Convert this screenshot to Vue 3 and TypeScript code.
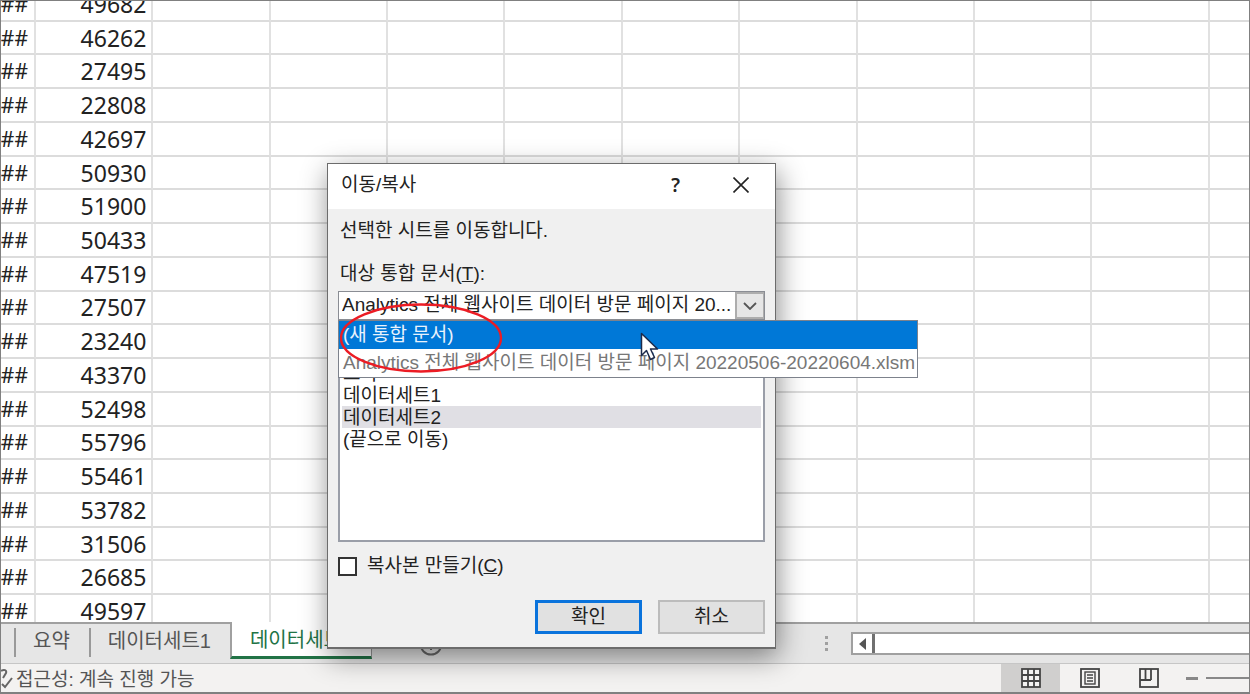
<script setup lang="ts">
import { ref } from 'vue'

const values: number[] = [
  49682, 46262, 27495, 22808, 42697, 50930, 51900, 50433, 47519, 27507,
  23240, 43370, 52498, 55796, 55461, 53782, 31506, 26685, 49597,
]
const emptyColumns = 10

const tabs = ['요약', '데이터세트1', '데이터세트2']
const activeTab = ref('데이터세트2')

const currentBook = 'Analytics 전체 웹사이트 데이터 방문 페이지 20...'
const books = ['(새 통합 문서)', 'Analytics 전체 웹사이트 데이터 방문 페이지 20220506-20220604.xlsm']
const hoveredBook = ref(0)

const sheets = ['요약', '데이터세트1', '데이터세트2', '(끝으로 이동)']
const beforeSheet = ref('데이터세트2')
const makeCopy = ref(false)
</script>

<template>
  <div class="app">
    <main class="sheet">
      <table class="grid">
        <colgroup>
          <col class="narrow" />
          <col v-for="c in emptyColumns + 1" :key="c" />
        </colgroup>
        <tbody>
          <tr v-for="(v, i) in values" :key="i">
            <td class="hash">##</td>
            <td class="num">{{ v }}</td>
            <td v-for="c in emptyColumns" :key="c"></td>
          </tr>
        </tbody>
      </table>
    </main>

    <nav class="tabbar">
      <div class="tabs">
        <button
          v-for="t in tabs"
          :key="t"
          type="button"
          class="tab"
          :class="{ active: t === activeTab }"
          @click="activeTab = t"
        >{{ t }}</button>
      </div>
      <button type="button" class="add" aria-label="새 시트">
        <svg width="24" height="24" viewBox="0 0 24 24" fill="none" stroke="#6a6a6a" stroke-width="2">
          <circle cx="12" cy="12" r="10.5" />
          <path d="M12 6v12M6 12h12" />
        </svg>
      </button>
      <svg class="grip" width="4" height="16" viewBox="0 0 4 16" fill="#a0a0a0">
        <rect width="3" height="3" x="0" y="0" /><rect width="3" height="3" x="0" y="6" /><rect width="3" height="3" x="0" y="12" />
      </svg>
      <div class="scroll">
        <button type="button" class="scroll-left" aria-label="왼쪽으로 스크롤">
          <svg width="8" height="12" viewBox="0 0 8 12" fill="#555"><path d="M7 0v12L0 6z" /></svg>
        </button>
      </div>
    </nav>

    <footer class="status">
      <svg class="acc" width="12" height="22" viewBox="0 0 12 22" fill="none" stroke="#666" stroke-width="2">
        <path d="M0 4c3-2 6-1 5 2l-3 5M1 17l3 3 7-9" />
      </svg>
      <span class="status-text">접근성: 계속 진행 가능</span>
      <button type="button" class="view on" aria-label="기본">
        <svg width="20" height="20" viewBox="0 0 20 20" fill="none" stroke="#444" stroke-width="1.8">
          <rect x="1" y="1" width="18" height="18" fill="#f3f2f1" /><path d="M7 1v18M13 1v18M1 7h18M1 13h18" />
        </svg>
      </button>
      <button type="button" class="view" aria-label="페이지 레이아웃">
        <svg width="20" height="20" viewBox="0 0 20 20" fill="none" stroke="#444" stroke-width="1.8">
          <rect x="1" y="1" width="18" height="18" /><rect x="5" y="4" width="10" height="12" stroke-width="1.4" /><path d="M7 7h6M7 10h6M7 13h6" stroke-width="1.4" />
        </svg>
      </button>
      <button type="button" class="view" aria-label="페이지 나누기 미리 보기">
        <svg width="20" height="20" viewBox="0 0 20 20" fill="none" stroke="#444" stroke-width="1.8">
          <rect x="1" y="1" width="18" height="18" /><path d="M6.500 1v11M12 1v11M1 12h11" />
        </svg>
      </button>
      <button type="button" class="minus" aria-label="축소"></button>
      <span class="zoom-line"></span>
    </footer>

    <section class="dialog" role="dialog" aria-labelledby="dlg-title">
      <header class="title">
        <h1 id="dlg-title">이동/복사</h1>
        <button type="button" class="help" aria-label="도움말">?</button>
        <button type="button" class="close" aria-label="닫기">
          <svg width="16" height="16" viewBox="0 0 16 16" stroke="#222" stroke-width="1.6"><path d="M0.500 0.500l15 15M15.500 0.500l-15 15" /></svg>
        </button>
      </header>
      <div class="body">
        <p class="lead">선택한 시트를 이동합니다.</p>
        <label class="book-label" for="book">대상 통합 문서(<u>T</u>):</label>
        <div class="combo">
          <select id="book"><option>{{ currentBook }}</option></select>
          <span class="chevron">
            <svg width="14" height="8" viewBox="0 0 14 8" fill="none" stroke="#555" stroke-width="1.8"><path d="M1 1l6 6 6-6" /></svg>
          </span>
          <ul class="menu" role="listbox" aria-label="통합 문서 목록">
            <li
              v-for="(b, i) in books"
              :key="b"
              role="option"
              :aria-selected="i === hoveredBook"
              :class="{ hover: i === hoveredBook }"
              @mouseenter="hoveredBook = i"
            >{{ b }}</li>
          </ul>
        </div>
        <select v-model="beforeSheet" class="list" size="6" aria-label="다음 시트의 앞에">
          <option v-for="s in sheets" :key="s" :value="s">{{ s }}</option>
        </select>
        <label class="copy">
          <input v-model="makeCopy" type="checkbox" />
          <span>복사본 만들기(<u>C</u>)</span>
        </label>
        <div class="actions">
          <button type="button" class="btn primary">확인</button>
          <button type="button" class="btn">취소</button>
        </div>
      </div>
      <svg class="ring" width="166" height="72" viewBox="0 0 166 72" fill="none" stroke="#ec1c24" stroke-width="2.4">
        <ellipse cx="83" cy="36" rx="80" ry="33.500" />
      </svg>
      <svg class="cursor" width="20" height="30" viewBox="0 0 20 30" fill="#fff" stroke="#1c2a4a" stroke-width="1.500" stroke-linejoin="round">
        <path d="M1.500 1.500v22l5-5 4 9 4-2-4-8.500h7z" />
      </svg>
    </section>
  </div>
</template>

<style>
html,
body {
  margin: 0;
  overflow: hidden;
}
</style>

<style scoped>
* {
  box-sizing: border-box;
}
.app {
  position: relative;
  display: flex;
  flex-direction: column;
  height: 100vh;
  border: 1px solid #808080;
  border-bottom-width: 2px;
  overflow: hidden;
  background: #fff;
  color: #222;
  font-family: "Liberation Sans", "Noto Sans CJK KR", sans-serif;
  font-size: 19px;
  line-height: 24px;
}
button,
select,
input {
  margin: 0;
  padding: 0;
  font: inherit;
  color: inherit;
  border: 0;
  border-radius: 0;
  background: none;
}
svg {
  display: block;
}

/* worksheet */
.sheet {
  flex: 1;
  min-height: 0;
  overflow: hidden;
}
.grid {
  table-layout: fixed;
  width: calc(100% + 78px);
  height: calc(100% + 20px);
  margin-top: -13px;
  border-collapse: separate;
  border-spacing: 0;
  font-family: "Noto Sans", sans-serif;
  font-size: 23px;
  line-height: 28px;
}
.narrow {
  width: 35px;
}
.grid td {
  padding: 0;
  border-right: 2px solid #e1e1e1;
  border-bottom: 2px solid #dcdcdc;
}
.grid .num {
  padding-right: 5px;
  text-align: right;
}
.grid .hash {
  padding-right: 7px;
  direction: rtl;
  text-align: right;
  overflow: hidden;
  font-size: 21px;
}

/* sheet tabs */
.tabbar {
  display: flex;
  align-items: center;
  height: 41px;
  border-top: 2px solid #a0a0a0;
  background: #e6e6e6;
}
.tabs {
  display: flex;
  align-self: flex-start;
  padding-left: 13px;
}
.tab {
  height: 33px;
  padding: 0 19px;
  color: #555;
  font-size: 20px;
  line-height: 32px;
  background: linear-gradient(#999, #999) 0 4px / 2px 29px no-repeat;
}
.tab.active {
  height: 37px;
  margin-top: -2px;
  padding: 2px 18px 0;
  border-right: 1px solid #999;
  border-left: 2px solid #a0a0a0;
  border-bottom: 3px solid #217346;
  background: #fff;
  color: #217346;
}
.add {
  margin-left: 47px;
}
.grip {
  margin-left: auto;
  margin-right: 22px;
}
.scroll {
  display: flex;
  width: 398px;
  height: 23px;
  border: 2px solid #a0a0a0;
  border-right: 0;
  background: #fff;
}
.scroll-left {
  display: flex;
  align-items: center;
  justify-content: center;
  width: 22px;
  border-right: 3px solid #707070;
}

/* status bar */
.status {
  display: flex;
  align-items: center;
  height: 29px;
  border-top: 1px solid #c6c6c6;
  background: #f3f2f1;
  color: #555;
}
.acc {
  margin-right: 3px;
}
.status-text {
  margin-right: auto;
  padding-top: 3px;
}
.view {
  display: flex;
  align-items: center;
  justify-content: center;
  width: 59px;
  height: 28px;
}
.view.on {
  background: #d0cfce;
}
.minus {
  width: 12px;
  height: 3px;
  margin-left: 8px;
  background: #888;
}
.zoom-line {
  width: 43px;
  height: 2px;
  margin-left: 8px;
  background: #888;
}

/* dialog window */
.dialog {
  position: absolute;
  left: 326px;
  top: 162px;
  width: 449px;
  border: 1px solid #6c6c6c;
  border-bottom-width: 2px;
  background: #f0f0f0;
  box-shadow: 2px 8px 26px rgba(0, 0, 0, 0.45);
}
.title {
  display: flex;
  align-items: center;
  height: 45px;
  padding: 0 26px 3px 13px;
  background: #fff;
}
.title h1 {
  flex: 1;
  margin: 0;
  font-size: 19px;
  font-weight: 400;
}
.help {
  margin-right: 53px;
  font-family: "Noto Sans", sans-serif;
  font-weight: 600;
}
.body {
  padding: 10px 10px 13px;
}
.lead {
  margin: 0 0 19px;
  padding-left: 2px;
}
.book-label {
  display: block;
  padding-left: 2px;
  margin-bottom: 5px;
}
.combo {
  position: relative;
  display: flex;
  height: 29px;
  border: 1px solid #8a8d94;
  background: #fff;
}
.combo select {
  flex: 1;
  min-width: 0;
  padding: 0 0 2px 3px;
  appearance: none;
  outline: 0;
}
.chevron {
  display: flex;
  align-items: center;
  justify-content: center;
  width: 29px;
  border: 2px solid #adadad;
  border-right-width: 1px;
  background: #e6e6e6;
}
.menu {
  position: absolute;
  left: -1px;
  top: 28px;
  margin: 0;
  padding: 0;
  min-width: 580px;
  border: 1px solid #7d828c;
  background: #fff;
  color: #777;
  list-style: none;
  white-space: nowrap;
}
.menu li {
  height: 28px;
  padding-left: 4px;
  line-height: 28px;
}
.menu .hover {
  background: #0078d7;
  color: #e8f2fc;
}
.list {
  display: block;
  width: 100%;
  height: 184px;
  margin-top: 38px;
  padding: 2px;
  border: 2px solid #9a9ea8;
  background: #fff;
  overflow: hidden;
  outline: 0;
  appearance: none;
}
.list option {
  display: flex;
  align-items: center;
  min-height: 22px;
  height: 22px;
  padding: 0 1px 4px;
  color: #222;
}
.list option:checked {
  background: #e0dfe4 linear-gradient(#e0dfe4, #e0dfe4);
}
.copy {
  display: flex;
  align-items: center;
  gap: 10px;
  margin-top: 12px;
}
.copy input {
  width: 19px;
  height: 19px;
  border: 2px solid #333;
  background: #fff;
  appearance: none;
}
.actions {
  display: flex;
  justify-content: flex-end;
  gap: 16px;
  margin-top: 22px;
}
.btn {
  width: 107px;
  height: 34px;
  border: 2px solid #bcbcbc;
  background: #e1e1e1;
}
.btn.primary {
  border: 3px solid #0a73dc;
}
.ring {
  position: absolute;
  left: 10px;
  top: 138px;
}
.cursor {
  position: absolute;
  left: 312px;
  top: 168px;
}
</style>
